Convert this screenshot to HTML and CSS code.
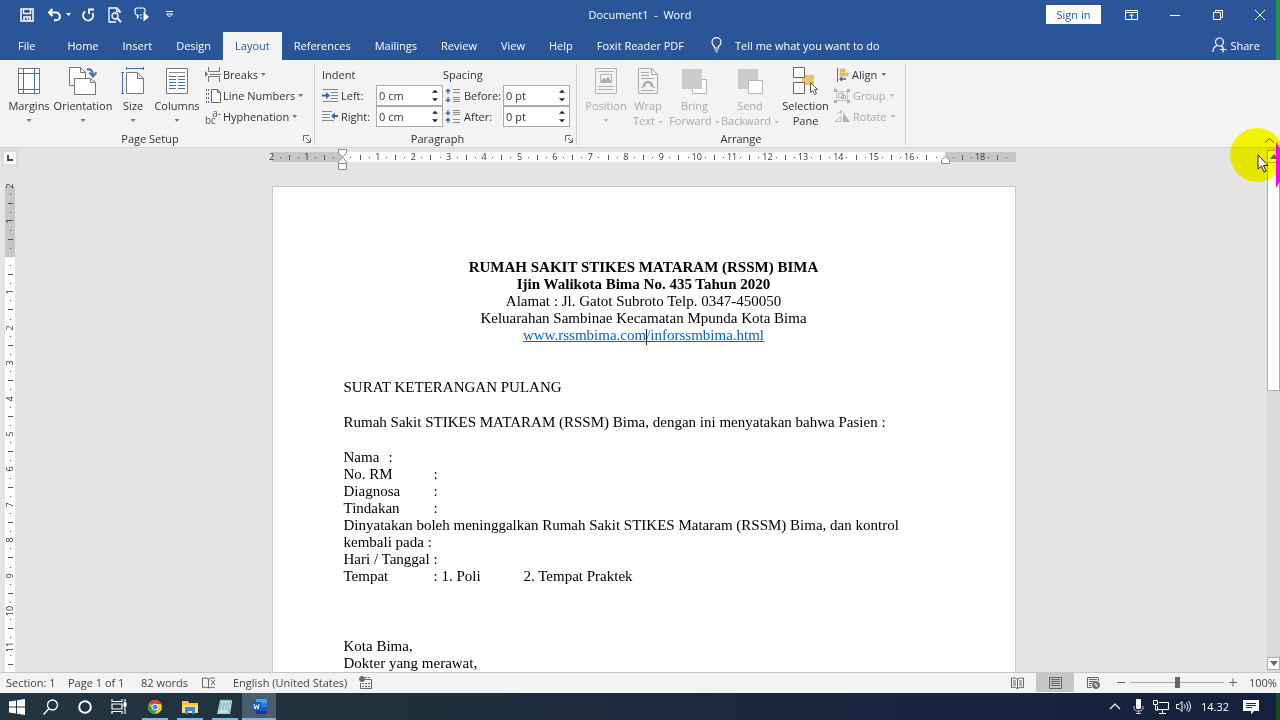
FILE: index.html
```html
<!DOCTYPE html>
<html lang="en">
<head>
<meta charset="utf-8">
<title>Document1 - Word</title>
<link rel="stylesheet" href="styles.css">
</head>
<body>
<div class="app">
  <header class="titlebar">
    <div class="quick">
      <button aria-label="Save"><svg width="14" height="14" viewBox="0 0 14 14" fill="none" stroke="#fff" stroke-width="1.5"><path d="M1 1h12v12H1zM3.500 1v4.500h7V1M4 13V9h6v4M7.500 10v3"/></svg></button>
      <button class="undo" aria-label="Undo"><svg width="15" height="14" viewBox="0 0 15 14" fill="none" stroke="#fff" stroke-width="2"><path d="M2 4.500h7a3.800 3.800 0 0 1 0 7.800H7M5.500 1 2 4.500 5.500 8"/></svg></button>
      <button class="undo-more" aria-label="Undo options"><svg width="5" height="3" viewBox="0 0 5 3"><path d="M0 0h5L2.500 3z" fill="#fff"/></svg></button>
      <button class="redo" aria-label="Repeat"><svg width="14" height="14" viewBox="0 0 14 14" fill="none" stroke="#fff" stroke-width="1.800"><path d="M4 3.500A5 5 0 1 0 11.500 5M8 6V1.500h5"/></svg></button>
      <button class="preview" aria-label="Print preview"><svg width="14" height="16" viewBox="0 0 14 16" fill="none" stroke="#fff" stroke-width="1.300"><path d="M12 6V4L9 1H1v14h7M8.500 1v3.500H12"/><circle cx="7" cy="9" r="3"/><path d="m9 11 4 4" stroke-width="2"/></svg></button>
      <button class="speak" aria-label="Read aloud"><svg width="15" height="15" viewBox="0 0 15 15" fill="none" stroke="#fff" stroke-width="1.200"><path d="M5 8.500 3.500 10.500V8H2.500Q1 7.500 1 5V3Q1 1 3 1h6q2 0 2 2v3"/><path d="M9.500 5v9.500L15 10z" fill="#fff" stroke="none"/><path d="M6 8h2M6 11h2"/></svg></button>
      <button class="customize" aria-label="Customize toolbar"><svg width="9" height="7" viewBox="0 0 9 7" fill="none" stroke="#fff"><path d="M1 .5h7M1.500 3l3 3 3-3z"/></svg></button>
    </div>
    <div class="title">Document1&nbsp; -&nbsp; Word</div>
    <div class="window-tools">
      <button class="signin">Sign in</button>
      <button aria-label="Ribbon display options"><svg width="13" height="10" viewBox="0 0 13 10" fill="none" stroke="#fff"><path d="M.5.5h12v9H.5zM.5 2.500h12M6.500 9V4M4.500 6l2-2 2 2"/></svg></button>
      <button aria-label="Minimize"><svg width="10" height="10" viewBox="0 0 10 10"><path d="M0 5.500h10" stroke="#fff"/></svg></button>
      <button aria-label="Restore"><svg width="10" height="10" viewBox="0 0 10 10" fill="none" stroke="#fff"><path d="M.5 2.500h7v7h-7zM2.500 2V.5h7v7H8"/></svg></button>
      <button class="close" aria-label="Close"><svg width="10" height="10" viewBox="0 0 10 10" fill="none" stroke="#fff"><path d="m0 0 10 10M10 0 0 10"/></svg></button>
    </div>
  </header>

  <nav class="tabs">
    <button class="file-tab">File</button>
    <button>Home</button>
    <button>Insert</button>
    <button>Design</button>
    <button class="selected">Layout</button>
    <button>References</button>
    <button>Mailings</button>
    <button>Review</button>
    <button>View</button>
    <button>Help</button>
    <button>Foxit Reader PDF</button>
    <button class="tell"><svg width="11" height="16" viewBox="0 0 11 16" fill="none" stroke="#fff" stroke-width="1.200"><path d="M3.500 11V9.500Q1 7.500 1 5.200a4.500 4.500 0 0 1 9 0Q10 7.500 7.500 9.500V11zM3.500 13h4M4.500 15h2"/></svg>Tell me what you want to do</button>
    <button class="share"><svg width="15" height="16" viewBox="0 0 15 16" fill="none" stroke="#fff" stroke-width="1.200"><circle cx="7.500" cy="5" r="4"/><path d="M1 15q0-5 4-6.500M9 9l2 1M11 9.500v6M8 12.500h6.500"/></svg>Share</button>
  </nav>

  <section class="ribbon" aria-label="Layout ribbon">
    <div class="group page-setup">
      <div class="group-body">
        <button class="big w-54"><svg width="22" height="28" viewBox="0 0 22 28" fill="none"><path d="M.5 1.500h21v25H.5z" fill="#fff" stroke="#777"/><path d="M5.500 1v26M16.500 1v26M0 6.500h22M0 22.500h22" stroke="#4472a8"/></svg><span>Margins</span><i class="caret"></i></button>
        <button class="big w-54"><svg width="28" height="28" viewBox="0 0 28 28" fill="none"><path d="M.5.5h11l5 5v13H.5z" fill="#fff" stroke="#777"/><path d="M11.500.5v5h5" stroke="#777"/><path d="M5.500 11.500h16l5 4v12h-21z" fill="#fff" stroke="#777"/><path d="M21.500 11.500v4h5" stroke="#777"/><path d="M18 2.500q6-1 6 6M20.500 5.500l3.500 4 3.500-4" stroke="#4472a8" stroke-width="2"/></svg><span>Orientation</span><i class="caret"></i></button>
        <button class="big w-46"><svg width="24" height="28" viewBox="0 0 24 28" fill="none"><path d="M5.500 5.500h11l6 6v15h-17z" fill="#fff" stroke="#777"/><path d="M16.500 5.500v6h6" stroke="#777"/><path d="M5 1.500h18M5.500 0v3M22.500 0v3M1.500 5v22M0 5.500h3M0 26.500h3" stroke="#4472a8"/></svg><span>Size</span><i class="caret"></i></button>
        <button class="big w-42"><svg width="22" height="28" viewBox="0 0 22 28" fill="none"><path d="M.5 1.500h21v25H.5z" fill="#fff" stroke="#777"/><path d="M3 5.500h16" stroke="#888"/><path d="M3 9.500h7M3 12.500h7M3 15.500h7M3 18.500h7M3 21.500h7M12 9.500h7M12 12.500h7M12 15.500h7M12 18.500h7M12 21.500h7" stroke="#4472a8"/></svg><span>Columns</span><i class="caret"></i></button>
        <div class="small-stack">
          <button><svg width="16" height="15" viewBox="0 0 16 15" fill="none" stroke="#777"><path d="M3.500 0v4.500h11V0M3.500 15V9.500h11V15M5 7.500h11" /><path d="M0 4l3 3-3 3z" fill="#4472a8" stroke="none"/></svg>Breaks<i class="caret"></i></button>
          <button><svg width="16" height="14" viewBox="0 0 16 14" fill="none"><path d="M6.500.5h6l3 3v10h-9z" fill="#fff" stroke="#666"/><path d="M12.500.5v3h3" stroke="#666"/><path d="M3.500 0v14M1.500 0v14" stroke="#4472a8" stroke-dasharray="2 2"/></svg>Line Numbers<i class="caret"></i></button>
          <button><span class="hyphen-icon"><span class="raised">a-</span><span>bc</span></span>Hyphenation<i class="caret"></i></button>
        </div>
      </div>
      <div class="group-label">Page Setup<button class="launcher" aria-label="Page setup options"><svg width="8" height="8" viewBox="0 0 8 8" fill="none" stroke="#666"><path d="M.5 6V.5H6M3 3l4 4M7.500 3.500v4h-4"/></svg></button></div>
    </div>

    <div class="group paragraph">
      <div class="fields">
        <span class="heading">Indent</span><span class="heading">Spacing</span>
        <label for="left"><svg width="16" height="14" viewBox="0 0 16 14" fill="none" stroke="#888"><path d="M1 .5h15M9 3.500h7M9 6.500h7M9 9.500h7M1 12.500h15"/><path d="M0 6.500h6" stroke="#3568a8" stroke-width="2"/><path d="M4 3v7l4-3.500z" fill="#3568a8" stroke="none"/></svg>Left:</label>
        <div class="spin"><input id="left" value="0 cm"><span><button aria-label="Increase left"></button><button class="down" aria-label="Decrease left"></button></span></div>
        <label class="second" for="before"><svg width="15" height="15" viewBox="0 0 15 15" fill="none"><path d="M8 1.500h7M8 4.500h7M8 9.500h7M8 11.500h7M8 13.500h7" stroke="#888"/><path d="M3 6V1M1 3.500l2-2 2 2M3 9v5M1 11.500l2 2 2-2" stroke="#3568a8" stroke-width="1.300"/></svg>Before:</label>
        <div class="spin"><input id="before" value="0 pt"><span><button aria-label="Increase before"></button><button class="down" aria-label="Decrease before"></button></span></div>
        <label for="right"><svg width="16" height="14" viewBox="0 0 16 14" fill="none" stroke="#888"><path d="M0 1.500h10M0 4.500h8M0 7.500h8M0 10.500h12"/><path d="M11 6h5" stroke="#3568a8" stroke-width="2"/><path d="M13 2.500v7L9 6z" fill="#3568a8" stroke="none"/></svg>Right:</label>
        <div class="spin"><input id="right" value="0 cm"><span><button aria-label="Increase right"></button><button class="down" aria-label="Decrease right"></button></span></div>
        <label class="second" for="after"><svg width="15" height="15" viewBox="0 0 15 15" fill="none"><path d="M8 1.500h7M8 3.500h7M8 5.500h7M8 10.500h7M8 13.500h7" stroke="#888"/><path d="M3 1v5M1 3.500l2 2 2-2M3 14V9M1 11.500l2-2 2 2" stroke="#3568a8" stroke-width="1.300"/></svg>After:</label>
        <div class="spin"><input id="after" value="0 pt"><span><button aria-label="Increase after"></button><button class="down" aria-label="Decrease after"></button></span></div>
      </div>
      <div class="group-label">Paragraph<button class="launcher" aria-label="Paragraph options"><svg width="8" height="8" viewBox="0 0 8 8" fill="none" stroke="#666"><path d="M.5 6V.5H6M3 3l4 4M7.500 3.500v4h-4"/></svg></button></div>
    </div>

    <div class="group arrange">
      <div class="group-body">
        <button class="big w-42" disabled><svg width="22" height="28" viewBox="0 0 22 28" fill="none" stroke="#b5b5b5"><path d="M.5 1.500h21v25H.5zM3 4.500h16M3 19.500h16M3 22.500h16M5.500 7.500h11v8h-11z"/><path d="m6 15 3-4 2 2 2-3 3 5z" fill="#aaa"/></svg><span>Position</span><i class="caret"></i></button>
        <button class="big w-42" disabled><svg width="20" height="28" viewBox="0 0 20 28" fill="none" stroke="#aaa"><path d="M.5 1.500h13l6 6v19H.5zM13.500 1.500v6h6M3 5.500h8M3 8.500h8M3 11.500h13M3 23.500h13M3 20.500h2M15 20.500h2"/><path d="M6 20v-1a4 4 0 0 1 8 0v1" stroke-width="2.500"/></svg><span>Wrap<br>Text<i class="caret"></i></span></button>
        <button class="big w-50" disabled><svg width="25" height="28" viewBox="0 0 25 28"><path d="M10.500 12.500h14v14h-14z" fill="#fff" stroke="#b5b5b5"/><path d="M0 2h20v20H0z" fill="#ccc"/></svg><span>Bring<br>Forward<i class="caret"></i></span></button>
        <button class="big w-60" disabled><svg width="25" height="28" viewBox="0 0 25 28"><path d="M0 2h20v20H0z" fill="#ccc"/><path d="M10.500 13.500h14v13h-14z" fill="#fff" stroke="#b5b5b5"/></svg><span>Send<br>Backward<i class="caret"></i></span></button>
        <button class="big w-50"><svg width="25" height="28" viewBox="0 0 25 28"><path d="M9 8h12v10H9z" fill="#ebc265"/><path d="M.5.5h11v10H.5zM.5 15.500h11v11H.5z" fill="#fff" stroke="#666"/><path d="M17.500 15.500v10l2-2 2 4 2-1-2-4h3z" fill="#fff" stroke="#555"/></svg><span>Selection<br>Pane</span></button>
        <div class="small-stack">
          <button><svg width="12" height="14" viewBox="0 0 12 14" fill="none"><path d="M.5 0v14" stroke="#666"/><path d="M3 1h5v3H3zM3 5h8v3H3z" fill="#ebc265" stroke="#c99b3f" stroke-width=".5"/><path d="M3 11h6M5 9l-2 2 2 2" stroke="#3568a8" stroke-width="1.300"/></svg>Align<i class="caret"></i></button>
          <button disabled><svg width="16" height="14" viewBox="0 0 16 14" fill="none" stroke="#b0b0b0"><path d="M2.500 2.500h11v9h-11z" stroke-dasharray="2 1"/><path d="M4.500 4.500h5v4h-5zM7.500 6.500h4v3h-4z"/><path d="M0 0h3v3H0zM13 0h3v3h-3zM0 11h3v3H0zM13 11h3v3h-3z" fill="#b0b0b0" stroke="none"/></svg>Group<i class="caret"></i></button>
          <button disabled><svg width="16" height="14" viewBox="0 0 16 14"><path d="M9 2v10h7z" fill="#b5b5b5"/><path d="M1 11.500h6V6zM3 4q2-3 5-2M6 0l2 2-2 2" fill="none" stroke="#bbb"/></svg>Rotate<i class="caret"></i></button>
        </div>
      </div>
      <div class="group-label">Arrange</div>
    </div>
    <button class="collapse" aria-label="Collapse ribbon"><svg width="9" height="5" viewBox="0 0 9 5" fill="none" stroke="#555"><path d="m0 4.500 4.500-4 4.500 4"/></svg></button>
  </section>

  <main class="workspace">
    <div class="left-rail">
      <button class="tab-stop" aria-label="Tab stop"><svg width="6" height="6" viewBox="0 0 6 6"><path d="M1 0v5h5" fill="none" stroke="#444" stroke-width="1.800"/></svg></button>
      <div class="v-ruler" id="v-ruler"></div>
    </div>
    <div class="canvas">
      <div class="h-ruler" id="h-ruler">
        <svg class="indent-left" width="9" height="21" viewBox="0 0 9 21" fill="#fff" stroke="#888"><path d="M.5.5h8V4l-4 4-4-4zM.5 12.500l4-4 4 4v2h-8zM.5 14.500h8v6h-8z"/></svg>
        <svg class="indent-right" width="9" height="8" viewBox="0 0 9 8" fill="#fff" stroke="#888"><path d="M.5 7.500V4l4-3.500 4 3.500v3.500z"/></svg>
      </div>
      <article class="page" lang="id">
        <div class="letterhead">
          <p><b>RUMAH SAKIT STIKES MATARAM (RSSM) BIMA</b></p>
          <p><b>Ijin Walikota Bima No. 435 Tahun 2020</b></p>
          <p>Alamat : Jl. Gatot Subroto Telp. 0347-450050</p>
          <p>Keluarahan Sambinae Kecamatan Mpunda Kota Bima</p>
          <p><a href="#">www.rssmbima.com<span class="cursor"></span>/inforssmbima.html</a></p>
        </div>
        <p class="block">SURAT KETERANGAN PULANG</p>
        <p class="block">Rumah Sakit STIKES MATARAM (RSSM) Bima, dengan ini menyatakan bahwa Pasien :</p>
        <div class="details">
          <p>Nama&#9;:</p>
          <p>No. RM&#9;:</p>
          <p>Diagnosa&#9;:</p>
          <p>Tindakan&#9;:</p>
          <p>Dinyatakan boleh meninggalkan Rumah Sakit STIKES Mataram (RSSM) Bima, dan kontrol kembali pada :</p>
          <p>Hari / Tanggal :</p>
          <p>Tempat&#9;: 1. Poli&#9;2. Tempat Praktek</p>
        </div>
        <div class="signature">
          <p>Kota Bima,</p>
          <p>Dokter yang merawat,</p>
        </div>
      </article>
    </div>
    <div class="scrollbar">
      <button aria-label="Scroll up"><svg width="8" height="5" viewBox="0 0 8 5"><path d="M0 5h8L4 0z" fill="#666"/></svg></button>
      <div class="thumb"></div>
      <button class="scroll-down" aria-label="Scroll down"><svg width="8" height="5" viewBox="0 0 8 5"><path d="M0 0h8L4 5z" fill="#666"/></svg></button>
    </div>
  </main>

  <footer class="status">
    <span class="section">Section: 1</span><span class="pages">Page 1 of 1</span><span class="words">82 words</span>
    <button class="proof" aria-label="Proofing"><svg width="14" height="12" viewBox="0 0 14 12" fill="none" stroke="#666"><path d="M6.500 2v9Q4 9.500.5 10.500V1Q4 .5 6.500 2q2-1.500 6-1M6.500 11q2-1.500 6-.5M9 3l4 5M13 3 9 8"/></svg></button>
    <span class="language">English (United States)</span>
    <button class="macro" aria-label="Record macro"><svg width="13" height="13" viewBox="0 0 13 13" fill="none" stroke="#666"><path d="M6 3.500h6.500v9h-11V7"/><path d="M3 7.500h9M3 10.500h9M6 1.500h6" stroke-dasharray="2 1"/><circle cx="3" cy="3" r="2.500" fill="#666"/></svg></button>
    <div class="views">
      <button aria-label="Read mode"><svg width="13" height="12" viewBox="0 0 13 12" fill="none" stroke="#666"><path d="M6.500 2v9.500Q4 9.500.5 10.500V1Q4 .5 6.500 2 9 .5 12.500 1v9.500Q9 9.500 6.500 11.500M2 4h3M2 6h3M2 8h3M8 4h3M8 6h3M8 8h3"/></svg></button>
      <button class="current" aria-label="Print layout"><svg width="13" height="12" viewBox="0 0 13 12" fill="none" stroke="#666"><path d="M.5.5h12v11H.5zM2 2.500h9M2 4.500h9M2 6.500h9M2 8.500h9"/></svg></button>
      <button aria-label="Web layout"><svg width="13" height="12" viewBox="0 0 13 12" fill="none" stroke="#666"><path d="M5 10.500H.5V.5h11V4M2 2.500h8M2 4.500h6M2 6.500h3M2 8.500h2"/><circle cx="9" cy="8" r="3.500" fill="#777"/><path d="M7 7h2v2h2" stroke="#eee"/></svg></button>
    </div>
    <div class="zoom">
      <button aria-label="Zoom out"><svg width="8" height="9" viewBox="0 0 8 9"><path d="M0 4.500h8" stroke="#666"/></svg></button>
      <input type="range" aria-label="Zoom" min="0" max="100" value="50">
      <button aria-label="Zoom in"><svg width="8" height="9" viewBox="0 0 8 9"><path d="M0 4.500h8M4 .5v8" stroke="#666"/></svg></button>
      <span class="percent">100%</span>
    </div>
  </footer>

  <footer class="taskbar">
    <button aria-label="Start"><svg width="16" height="16" viewBox="0 0 16 16" fill="#fff"><path d="M0 2.500 7 1.500v6H0zM8 1.300 16 0v7.500H8zM0 8.500h7v6l-7-1zM8 8.500h8V16l-8-1.300z"/></svg></button>
    <button aria-label="Search"><svg width="16" height="16" viewBox="0 0 16 16" fill="none" stroke="#fff" stroke-width="1.300"><circle cx="9.500" cy="6" r="5"/><path d="M6 9.500.5 15.500"/></svg></button>
    <button aria-label="Cortana"><svg width="14" height="14" viewBox="0 0 14 14" fill="none" stroke="#fff" stroke-width="2"><circle cx="7" cy="7" r="5.800"/></svg></button>
    <button aria-label="Task view"><svg width="16" height="15" viewBox="0 0 16 15" fill="none" stroke="#fff" stroke-width="1.200"><path d="M1 0v2.500h10V0M1 5h10v5H1zM1 15v-2.500h10V15M14 0v15"/><path d="M13 4h2v3h-2z" fill="#fff"/></svg></button>
    <button class="running chrome" aria-label="Chrome"><svg width="14" height="14" viewBox="0 0 14 14"><circle cx="7" cy="7" r="7" fill="#fbc02d"/><path d="M7 7 1 3.400A7 7 0 0 1 13.500 4H7z" fill="#e44235"/><path d="M1 3.400A7 7 0 0 0 6.500 14L10 8.500 7 7l-3 1.500z" fill="#2e9e4f"/><circle cx="7" cy="7" r="3.200" fill="#fff"/><circle cx="7" cy="7" r="2.500" fill="#4285f4"/></svg></button>
    <button class="running" aria-label="File Explorer"><svg width="16" height="14" viewBox="0 0 16 14"><path d="M0 1h6l1 2h9v10H0z" fill="#f6c445"/><path d="M0 5h16v8H0z" fill="#ffdc75"/><path d="M3 14V7h10v7h-3v-3H6v3z" fill="#3b8fd6"/></svg></button>
    <button class="running" aria-label="Notepad"><svg width="15" height="16" viewBox="0 0 15 16"><path d="M3 1h11l-2 14H0z" fill="#9ccfd3"/><path d="M4 2h8l-2 12H2z" fill="#bfe6e6"/><path d="M3 1h11M3 4h9M3 6h8M2 8h9M2 10h8" stroke="#6ba1a8" stroke-dasharray="2 1"/><path d="m12 15 2-14 1 1-2 13z" fill="#e9f3f2"/></svg></button>
    <button class="running active" aria-label="Word"><svg width="15" height="15" viewBox="0 0 15 15"><rect x="4" y="0" width="11" height="15" rx="1" fill="#41a5ee"/><path d="M4 4h11v4H4z" fill="#2b7cd3"/><path d="M4 8h11v4H4z" fill="#185abd"/><path d="M4 12h11v3H4z" fill="#103f91"/><rect y="3" width="9" height="9" rx="1" fill="#185abd"/><path d="m2 5 1 5 1.500-4L6 10l1-5" fill="none" stroke="#fff"/></svg></button>
    <div class="tray">
      <button aria-label="Hidden icons"><svg width="12" height="7" viewBox="0 0 12 7" fill="none" stroke="#fff" stroke-width="1.200"><path d="m1 6 5-5 5 5"/></svg></button>
      <button aria-label="Microphone"><svg width="11" height="15" viewBox="0 0 11 15"><rect x="3" y="0" width="5" height="10" rx="1" fill="#fff"/><path d="M1 7v2q0 3 4.500 3T10 9V7M5.500 12v3M3 14.500h5" fill="none" stroke="#ccc"/></svg></button>
      <button aria-label="Network"><svg width="16" height="14" viewBox="0 0 16 14" fill="none" stroke="#fff"><path d="M6 2.500h9.500v7h-11V6M9.500 10v3M6 13.500h7M.5.500h4v4h-4zM2.500 5v5H5"/></svg></button>
      <button aria-label="Volume"><svg width="16" height="13" viewBox="0 0 16 13" fill="none" stroke="#fff"><path d="M.5 4.500H3l3-3v10l-3-3H.5zM8.500 4.500q1.500 2 0 4M10.500 2.500q3 4 0 8M12.500 1q4 5.500 0 11"/></svg></button>
      <time>14.32</time>
      <button class="notice" aria-label="Notifications"><svg width="16" height="16" viewBox="0 0 16 16"><path d="M0 1h16v11h-5l-3 3.500V12H0z" fill="#fff"/><path d="M3 4.500h10M3 6.500h10M3 8.500h6" stroke="#1a2540"/></svg></button>
    </div>
  </footer>

  <div class="edge-green"></div>
  <div class="edge-green edge-green-bottom"></div>
  <div class="highlight"></div>
  <div class="edge-magenta"></div>
  <svg class="pointer" width="12" height="19" viewBox="0 0 12 19"><path d="M1 1v14l3.500-3 2.500 6 2-1-2.500-5.500H11z" fill="#fff" stroke="#222"/></svg>
</div>
<script src="ruler.js"></script>
</body>
</html>
```
FILE: ruler.js
```js
// Each cell spans one centimetre, starting at its number.
function buildRuler(id, first, last, hidden) {
  const ruler = document.getElementById(id);
  for (let cm = first; cm <= last; cm++) {
    const cell = document.createElement('div');
    cell.className = 'cm';
    const label = cm === 0 || cm === hidden ? '' : Math.abs(cm);
    cell.innerHTML = '<span class="number">' + label + '</span><i class="dot"></i><i class="tick"></i><i class="dot"></i>';
    ruler.append(cell);
  }
}
buildRuler('h-ruler', -2, 18, 17);
buildRuler('v-ruler', -2, 11);
```
FILE: styles.css
```css
* { box-sizing: border-box; }
body { margin: 0; font: 11px/15px "Open Sans", "Noto Sans", sans-serif; color: #333; }
button, input { font: inherit; color: inherit; }
button { display: flex; align-items: center; justify-content: center; padding: 0; border: 0; background: none; white-space: nowrap; }
svg { display: block; flex: none; }
p { margin: 0; }

.app { position: relative; display: flex; flex-direction: column; height: 100vh; overflow: hidden; }

.titlebar { display: grid; grid-template-columns: 1fr auto 1fr; align-items: center; height: 29px; background: #2a5699; color: #fff; }
.quick { display: flex; align-items: center; padding-left: 20px; }
.undo { margin-left: 13px; }
.undo-more { margin-left: 4px; }
.redo { margin-left: 10px; }
.preview { margin-left: 13px; }
.speak { margin-left: 12px; }
.customize { margin-left: 16px; }
.window-tools { display: flex; justify-content: flex-end; align-items: center; }
.window-tools button { width: 43px; height: 29px; }
.window-tools .close { width: 41px; }
.window-tools .signin { width: 55px; height: 19px; margin-right: 9px; background: #fff; color: #2a5699; }

.tabs { display: flex; align-items: stretch; height: 31px; padding-top: 3px; background: #2a5699; color: #fff; }
.tabs button { padding: 0 12px 2px; }
.tabs .file-tab { padding: 0 20px 2px 18px; }
.tabs .selected { background: #f3f3f3; color: #2a5699; }
.tabs .tell { gap: 13px; padding-left: 15px; }
.tabs .share { gap: 3px; margin-left: auto; padding-right: 20px; }

.ribbon { display: flex; height: 88px; background: #f3f3f3; border-bottom: 1px solid #d2d2d2; }
.group { display: flex; flex-direction: column; margin: 4px 0 2px; border-right: 1px solid #d0d0d0; }
.page-setup { width: 315px; padding-left: 2px; }
.paragraph { width: 262px; }
.arrange { width: 329px; padding-left: 8px; }
.group-body { display: flex; flex: 1; }
.group-label { position: relative; display: flex; justify-content: center; height: 14px; padding-right: 16px; }
.arrange .group-label { padding-right: 8px; }
.launcher { position: absolute; right: 3px; top: 4px; }
.big { flex-direction: column; justify-content: flex-start; padding-top: 3px; }
.big span { margin-top: 3px; }
.big > .caret { margin: 6px 0 0; }
.w-42 { width: 42px; }
.w-46 { width: 46px; }
.w-50 { width: 51px; }
.w-54 { width: 54px; }
.w-60 { width: 60px; }
button:disabled { color: #aaa; }
.caret { display: inline-block; width: 5px; height: 3px; margin-left: 3px; vertical-align: middle; background: #777; clip-path: polygon(0 0, 100% 0, 50% 100%); }
button:disabled .caret { background: #bbb; }
.small-stack { display: flex; flex-direction: column; align-items: flex-start; }
.small-stack button { height: 21px; gap: 2px; }
.small-stack .caret { margin-left: 1px; }
.page-setup .small-stack { margin-left: 7px; }
.arrange .small-stack { margin-left: 3px; }
.arrange .small-stack button { gap: 3px; }
.arrange .small-stack button:first-child { padding-left: 3px; }
.hyphen-icon { display: flex; flex-direction: column; width: 16px; font-size: 10px; line-height: 7px; text-align: left; color: #555; }
.hyphen-icon .raised { text-align: right; }
.fields { display: grid; grid-template-columns: 54px 67px 60px 67px; grid-auto-rows: 21px; align-items: center; flex: 1; padding-left: 7px; }
.heading { grid-column: span 2; }
.fields label { display: flex; align-items: center; gap: 3px; white-space: nowrap; }
.fields .second { gap: 4px; padding-left: 2px; }
.spin { display: flex; height: 21px; border: 1px solid #ababab; background: #fff; }
.spin input { flex: 1; min-width: 0; border: 0; padding: 0 2px; background: none; }
.spin span { display: flex; flex-direction: column; justify-content: space-around; width: 14px; padding: 1px 4px; }
.spin button { width: 6px; height: 3px; background: #222; clip-path: polygon(50% 0, 100% 100%, 0 100%); }
.spin .down { clip-path: polygon(0 0, 100% 0, 50% 100%); }
.collapse { align-self: flex-end; margin: 0 6px 4px auto; }

.workspace { display: flex; flex: 1; min-height: 0; background: #e5e5e5; }
.left-rail { display: flex; flex-direction: column; flex: none; width: 20px; overflow: hidden; }
.tab-stop { flex: none; width: 18px; height: 18px; margin: 1px 0 19px 1px; border: 3px solid #dcdcdc; background: #fff; }
.v-ruler { flex: none; display: grid; grid-auto-rows: 1fr; width: 10px; height: 496px; margin-left: 5px; background: linear-gradient(#c6c6c6 71px, #fff 71px); }
.v-ruler .cm { flex-direction: column; }
.canvas { flex: 1; min-width: 0; overflow: hidden; padding-top: 4px; }
.h-ruler { position: relative; display: grid; grid-auto-flow: column; grid-auto-columns: 1fr; width: 744px; height: 10px; margin: 0 auto 24px; background: linear-gradient(90deg, #c6c6c6 71px, #fff 71px, #fff 673px, #c6c6c6 673px); }
.cm { display: flex; align-items: center; justify-content: space-between; min-width: 0; font-size: 9px; line-height: 10px; }
.number { display: flex; justify-content: center; align-items: center; width: 0; height: 10px; }
.v-ruler .number { width: 10px; height: 0; transform: rotate(-90deg); }
.dot, .tick { width: 1px; height: 1px; background: #555; }
.tick { height: 5px; }
.v-ruler .tick { width: 5px; height: 1px; }
.cm::after { content: ""; width: 0; height: 0; }
.indent-left { position: absolute; left: 66px; top: -3px; }
.indent-right { position: absolute; left: 669px; top: 4px; }

.page { width: 744px; min-height: 1052px; margin: 0 auto; padding: 72px 71px; border: 1px solid #c8c8c8; background: #fff; color: #000; font: 15px/17px "Liberation Serif", serif; }
.page p { white-space: pre-wrap; tab-size: 45px; }
.letterhead { text-align: center; margin-bottom: 34px; }
.letterhead a { color: #0563c1; }
.cursor { display: inline-block; width: 1px; height: 16px; margin-right: -1px; vertical-align: middle; background: #222; }
.block { margin-bottom: 18px; }
.signature { margin-top: 53px; }

.scrollbar { display: flex; flex-direction: column; flex: none; width: 13px; padding: 2px 0; background: #dadada; }
.scrollbar button { flex: none; height: 13px; border: 1px solid #ababab; background: #fff; }
.thumb { height: 228px; border: 1px solid #ababab; border-top: 0; background: #fff; }
.scrollbar .scroll-down { margin-top: auto; }

.status { display: flex; align-items: center; flex: none; height: 21px; padding: 0 1px 1px 6px; border-top: 1px solid #c6c6c6; background: #f3f3f3; color: #444; white-space: nowrap; }
.section { width: 62px; }
.pages { width: 73px; }
.words { width: 61px; }
.proof { width: 14px; margin-right: 17px; }
.language { width: 126px; }
.views { display: flex; align-self: stretch; margin-left: auto; }
.views button { width: 38px; }
.views .current { background: #c6c6c6; }
.zoom { display: flex; align-items: center; margin-left: 5px; }
.zoom input { appearance: none; width: 94px; height: 13px; margin: 0 5px; background: linear-gradient(#aaa, #aaa) center / 100% 1px no-repeat; }
.zoom input::-webkit-slider-thumb { appearance: none; width: 5px; height: 11px; background: #666; }
.percent { width: 30px; margin-left: 12px; }

.taskbar { display: flex; flex: none; height: 27px; background: linear-gradient(90deg, #22353f, #1f303d 35%, #182440 75%, #15203c); color: #fff; }
.taskbar > button { width: 34px; }
.taskbar .running { width: 35px; background: linear-gradient(#76b9ed, #76b9ed) center bottom / 26px 2px no-repeat; }
.taskbar .chrome { margin-left: 1px; }
.taskbar .active { width: 34px; background: linear-gradient(#76b9ed, #76b9ed) center bottom / 100% 2px no-repeat #4c5c6a; }
.tray { display: flex; align-items: center; margin-left: auto; padding-right: 18px; }
.tray button { width: 23px; }
.tray time { margin: 0 10px 0 5px; }

.edge-green { position: absolute; right: 0; top: 0; width: 4px; height: 60px; background: #20964b; }
.edge-green-bottom { top: auto; bottom: 0; height: 27px; background: #1b4a25; }
.highlight { position: absolute; right: -4px; top: 128px; width: 54px; height: 54px; border-radius: 50%; background: #ff0; mix-blend-mode: multiply; }
.edge-magenta { position: absolute; right: 0; top: 142px; width: 4px; height: 46px; background: #f0f; clip-path: polygon(0 0, 100% 15%, 100% 85%, 0 100%); }
.pointer { position: absolute; right: 11px; top: 154px; }
```
